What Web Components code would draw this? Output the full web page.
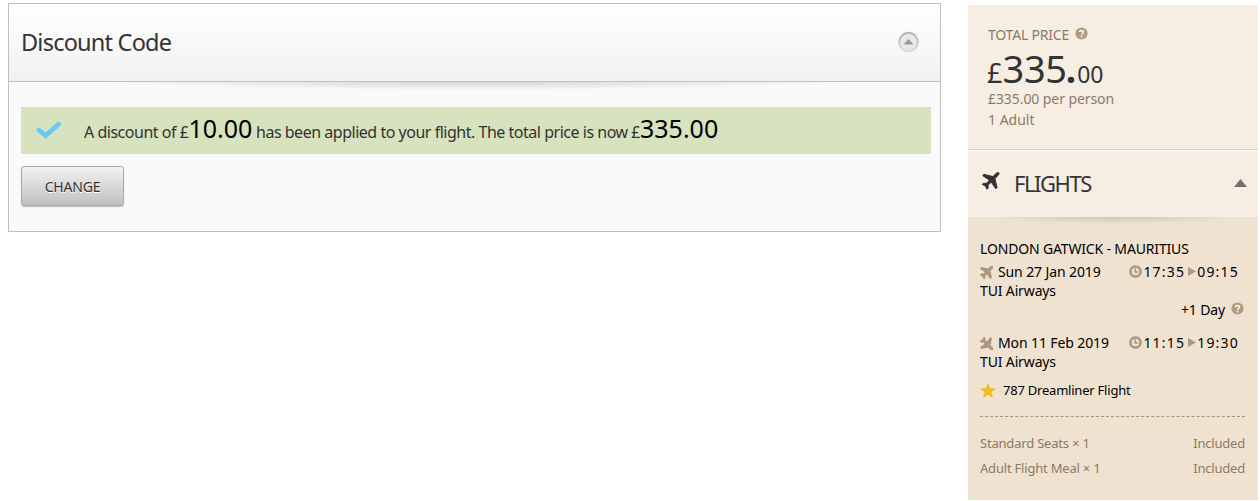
<!DOCTYPE html>
<html lang="en">
<head>
<meta charset="utf-8">
<title>Discount Code</title>
<style>
    body {
        margin: 0;
        background: #fff;
        color: #333;
        font-family: "Noto Sans", "Open Sans", sans-serif;
    }
</style>
</head>
<body>

<booking-page>
    <discount-panel heading="Discount Code">
        <discount-message>A discount of £<b>10.00</b> has been applied to your flight. The total price is now £<b>335.00</b></discount-message>
        <grey-button>CHANGE</grey-button>
    </discount-panel>
    <price-summary slot="side">
        <total-price></total-price>
        <flights-header>FLIGHTS</flights-header>
        <flight-details></flight-details>
    </price-summary>
</booking-page>

<script>
    const icons = {
        help: `<svg width="13" height="13" viewBox="0 0 13 13"><circle cx="6.5" cy="6.5" r="6.1" fill="#b39d80"/><path d="M4.6 5.1C4.6 3 8.5 3 8.5 5.1C8.5 6.4 6.6 6.4 6.6 7.8" fill="none" stroke="#f7eee3" stroke-width="1.7"/><rect x="5.7" y="8.6" width="1.8" height="1.7" fill="#f7eee3"/></svg>`,
        plane: `<svg width="19" height="18" viewBox="0 0 18 18" fill="currentColor" stroke="currentColor" stroke-linejoin="round"><path d="M17.2.8c.6.7.2 1.800-.7 2.700L13.400 6.600l2.200 8.900-1.300 1.300-4.600-6.700-3.200 3.100.2 2.900-1.200 1.200-1.700-3.300L.8 12.400 2 11.200l2.800.2 3.100-3.200L1.200 3.600 2.500 2.300l8.900 2.300L14.500 1.500c.9-.9 2.100-1.300 2.700-.7z"/></svg>`,
        clock: `<svg width="13" height="13" viewBox="0 0 13 13" fill="none" stroke="#a99881"><circle cx="6.5" cy="6.5" r="5.1" stroke-width="2.5"/><path d="M6.2 3.300v3.700h3" stroke-width="1.500"/></svg>`,
        star: `<svg width="16" height="15" viewBox="0 0 16 15"><path fill="#f5b921" d="M8 0l2.200 5.300 5.700.3-4.500 3.600 1.600 5.700L8 11.700l-5 3.200 1.600-5.700L.1 5.600l5.700-.3z"/></svg>`
    }

    class BookingPage extends HTMLElement {
        constructor() {
            super()
            this.attachShadow({ mode: 'open' }).innerHTML = `
            <style>
                :host {
                    display: flex;
                    align-items: flex-start;
                    justify-content: space-between;
                    box-sizing: border-box;
                    height: 501px;
                    padding: 3px 2px 0 8px;
                    overflow: hidden;
                }
            </style>
            <slot></slot>
            <slot name="side"></slot>`
        }
    }

    class DiscountPanel extends HTMLElement {
        constructor() {
            super()
            this.attachShadow({ mode: 'open' }).innerHTML = `
            <style>
                :host {
                    display: block;
                    box-sizing: border-box;
                    width: 933px;
                    height: 229px;
                    border: 1px solid #bfbfbf;
                    background: #fafafa;
                }
                header {
                    display: flex;
                    align-items: center;
                    justify-content: space-between;
                    box-sizing: border-box;
                    height: 78px;
                    padding: 0 21px 1px 12px;
                    border-bottom: 1px solid #bfbfbf;
                    background: linear-gradient(#fff, #f1f1f1);
                }
                h1 {
                    margin: 0;
                    font-size: 23.5px;
                    font-weight: 400;
                    line-height: 32px;
                    letter-spacing: -.78px;
                }
                .body {
                    padding: 25px 9px 0 12px;
                    background: radial-gradient(ellipse 380px 8px at 50% 0, #d6d6d6, rgba(250, 250, 250, 0)) no-repeat;
                }
                svg { display: block; }
            </style>
            <header>
                <h1>${this.getAttribute('heading')}</h1>
                <svg width="22" height="22" viewBox="0 0 22 22">
                    <defs><linearGradient id="g" x2="0" y2="1"><stop stop-color="#b5b5b5"/><stop offset="1" stop-color="#dedede"/></linearGradient></defs>
                    <circle cx="11.500" cy="11" r="9.200" fill="#e9e9e9" stroke="url(#g)" stroke-width="2.200"/>
                    <path d="M6.500 13.500l5-5.500 5 5.500z" fill="#999"/>
                </svg>
            </header>
            <div class="body"><slot></slot></div>`
        }
    }

    class DiscountMessage extends HTMLElement {
        constructor() {
            super()
            this.attachShadow({ mode: 'open' }).innerHTML = `
            <style>
                :host {
                    display: flex;
                    align-items: center;
                    height: 47px;
                    margin-bottom: 12px;
                    background: #d7e2be;
                    font-size: 16px;
                    letter-spacing: -.48px;
                }
                svg { margin: 0 22px 0 15px; }
                p { margin: 2px 0 0; line-height: 40px; white-space: pre; }
                ::slotted(b) {
                    color: #000;
                    font-size: 25px;
                    font-weight: 400;
                    line-height: 1;
                    letter-spacing: 0;
                }
            </style>
            <svg width="26" height="19" viewBox="0 0 26 19"><path d="M3 9L9.500 14.800 22.500 3.200" fill="none" stroke="#6bcaf3" stroke-width="4.800" stroke-linecap="round"/></svg>
            <p><slot></slot></p>`
        }
    }

    class GreyButton extends HTMLElement {
        constructor() {
            super()
            this.attachShadow({ mode: 'open' }).innerHTML = `
            <style>
                :host { display: block; }
                button {
                    display: block;
                    width: 103px;
                    height: 40px;
                    padding: 1px 0 0;
                    border: 1px solid #aaa;
                    border-radius: 3px;
                    background: linear-gradient(#f2f2f2, #c0c0c0);
                    box-shadow: 0 1px 1px #bbb;
                    color: #333;
                    font: inherit;
                    font-size: 14px;
                    letter-spacing: -.2px;
                    text-shadow: 0 1px 0 #fff;
                }
            </style>
            <button><slot></slot></button>`
        }
    }

    class PriceSummary extends HTMLElement {
        constructor() {
            super()
            this.attachShadow({ mode: 'open' }).innerHTML = `
            <style>
                :host {
                    display: flex;
                    flex-direction: column;
                    width: 290px;
                    height: 495px;
                    margin-top: 2px;
                    background: #efe2d1;
                }
            </style>
            <slot></slot>`
        }
    }

    class TotalPrice extends HTMLElement {
        constructor() {
            super()
            this.attachShadow({ mode: 'open' }).innerHTML = `
            <style>
                :host {
                    display: block;
                    box-sizing: border-box;
                    height: 145px;
                    padding: 19px 20px 0;
                    border-bottom: 1px solid #d9cdbd;
                    background: #f7eee3;
                    color: #8c7a64;
                    font-size: 14px;
                    line-height: 21px;
                }
                .label { display: flex; gap: 6px; letter-spacing: -.2px; }
                .label svg { margin-top: 3px; }
                .price { margin-left: -1px; height: 43px; line-height: 47px; color: #333; font-size: 27px; white-space: nowrap; }
                .price b { font-size: 38px; font-weight: 400; letter-spacing: -.3px; }
                .price i { margin: 0 1px 0 -1px; font-size: 37px; font-weight: 700; font-style: normal; }
                .price small { font-size: 23px; }
                .person { letter-spacing: -.08px; }
            </style>
            <div class="label"><span>TOTAL PRICE</span>${icons.help}</div>
            <div class="price">£<b>335</b><i>.</i><small>00</small></div>
            <div class="person"><span>£335.00 per person</span></div>
            <div><span>1 Adult</span></div>`
        }
    }

    class FlightsHeader extends HTMLElement {
        constructor() {
            super()
            this.attachShadow({ mode: 'open' }).innerHTML = `
            <style>
                :host {
                    display: flex;
                    align-items: center;
                    box-sizing: border-box;
                    height: 67px;
                    padding: 0 11px 2px 14px;
                    border-top: 1px solid #fff;
                    background: #f7eee3;
                    font-size: 22px;
                    letter-spacing: -1.45px;
                }
                .plane { height: 18px; margin: -4px 14px 0 -1px; }
                .plane svg { display: block; }
                .up { margin-left: auto; }
            </style>
            <div class="plane">${icons.plane}</div>
            <span><slot></slot></span>
            <svg class="up" width="13" height="8" viewBox="0 0 13 8"><path d="M0 8L6.500 0 13 8z" fill="#737170"/></svg>`
        }
    }

    class FlightLeg extends HTMLElement {
        constructor() {
            super()
            this.attachShadow({ mode: 'open' }).innerHTML = `
            <style>
                :host { display: block; line-height: 19px; letter-spacing: -.11px; }
                .row { display: flex; align-items: center; }
                .plane { width: 14px; height: 13px; margin: 2px 4px 0 0; color: #a99881; }
                .plane svg { display: block; width: 13px; height: 13px; stroke-width: 1.8; }
                :host([inbound]) .plane svg { transform: rotate(90deg); }
                .time { display: flex; align-items: center; margin-left: auto; margin-right: 6px; letter-spacing: 1.2px; }
                .time svg { margin-right: 1px; }
                .time .arrow { margin: 0 1px 0 3px; }
                .airline { letter-spacing: -.14px; }
            </style>
            <div class="row">
                <div class="plane">${icons.plane}</div>
                <span>${this.getAttribute('date')}</span>
                <div class="time">${icons.clock}<span>${this.getAttribute('from')}</span><svg class="arrow" width="8" height="9" viewBox="0 0 8 9"><path d="M0 0l8 4.500L0 9z" fill="#a99881"/></svg><span>${this.getAttribute('to')}</span></div>
            </div>
            <div class="airline"><span>TUI Airways</span></div>`
        }
    }

    class FlightDetails extends HTMLElement {
        constructor() {
            super()
            this.attachShadow({ mode: 'open' }).innerHTML = `
            <style>
                :host {
                    display: block;
                    padding: 22px 13px 0 12px;
                    background: radial-gradient(ellipse 125px 7px at 50% 0, #d3c5b3, rgba(239, 226, 209, 0)) no-repeat;
                    color: #000;
                    font-size: 14px;
                }
                .route { margin-bottom: 3px; line-height: 20px; letter-spacing: -.16px; }
                .day { display: flex; justify-content: flex-end; gap: 6px; line-height: 19px; margin-bottom: 14px; letter-spacing: -.15px; }
                .day svg { margin: 2px 1px 0 0; }
                .plus { display: flex; align-items: center; gap: 7px; margin-top: 9px; font-size: 13px; line-height: 20px; letter-spacing: -.22px; }
                .dash { margin: 16px 0 14px; border-top: 1px dashed #a8937a; }
                .extra { display: flex; justify-content: space-between; color: #8c7a64; font-size: 13px; line-height: 25px; letter-spacing: -.2px; }
            </style>
            <div class="route"><span>LONDON GATWICK - MAURITIUS</span></div>
            <flight-leg date="Sun 27 Jan 2019" from="17:35" to="09:15"></flight-leg>
            <div class="day"><span>+1 Day</span>${icons.help}</div>
            <flight-leg inbound date="Mon 11 Feb 2019" from="11:15" to="19:30"></flight-leg>
            <div class="plus">${icons.star}<span>787 Dreamliner Flight</span></div>
            <div class="dash"></div>
            <div class="extra"><span>Standard Seats × 1</span><span>Included</span></div>
            <div class="extra"><span>Adult Flight Meal × 1</span><span>Included</span></div>`
        }
    }

    customElements.define('booking-page', BookingPage)
    customElements.define('discount-panel', DiscountPanel)
    customElements.define('discount-message', DiscountMessage)
    customElements.define('grey-button', GreyButton)
    customElements.define('price-summary', PriceSummary)
    customElements.define('total-price', TotalPrice)
    customElements.define('flights-header', FlightsHeader)
    customElements.define('flight-leg', FlightLeg)
    customElements.define('flight-details', FlightDetails)
</script>
</body>
</html>
